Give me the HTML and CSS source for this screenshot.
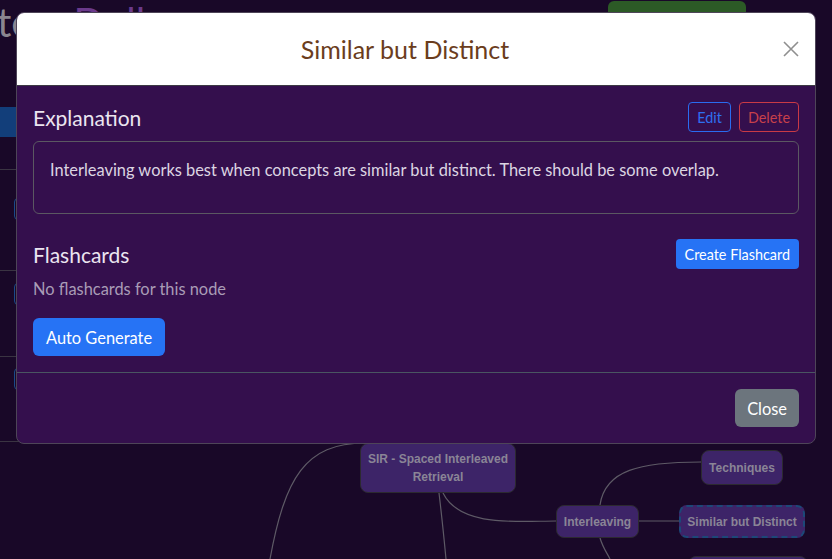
FILE: index.html
```html
<!DOCTYPE html>
<html lang="en">
<head>
<meta charset="utf-8">
<title>Similar but Distinct</title>
<link rel="stylesheet" href="styles.css">
</head>
<body>
<div class="app">
  <header class="topbar">
    <span class="brand-a">te</span>
    <span class="brand-b">Dolly</span>
    <span class="spacer"></span>
    <button class="btn-green">New Map</button>
  </header>
  <div class="main">
    <aside class="sidebar">
      <div class="side-head"></div>
      <div class="side-active"></div>
      <div class="side-row r1"><span class="side-btn"></span></div>
      <div class="side-row r2"><span class="side-btn"></span></div>
      <div class="side-row r3"><span class="side-btn"></span></div>
      <div class="side-row r4"><span class="side-btn"></span></div>
    </aside>
    <section class="canvas">
      <svg class="links" width="582" height="511" viewBox="0 0 582 511">
        <path d="M115 395 C55 395 35 430 20 511"/>
        <path d="M189 445 C192 470 194 490 196 511"/>
        <path d="M193 445 C210 480 270 473 306 473"/>
        <path d="M350 457 C355 422 390 414 451 414"/>
        <path d="M389 473 L429 473"/>
        <path d="M350 490 C353 500 357 505 360 511"/>
      </svg>
      <div class="node n-sir">SIR - Spaced Interleaved<br>Retrieval</div>
      <div class="node n-tech">Techniques</div>
      <div class="node n-inter">Interleaving</div>
      <div class="node n-sim">Similar but Distinct</div>
      <div class="node n-next"></div>
    </section>
  </div>
</div>

<div class="modal">
  <div class="modal-header">
    <h4 class="modal-title">Similar but Distinct</h4>
    <button class="btn-close" aria-label="Close">
      <svg width="16" height="16" viewBox="0 0 16 16"><path d="M1 1 L15 15 M15 1 L1 15"/></svg>
    </button>
  </div>
  <div class="modal-body">
    <div class="row-head">
      <h5>Explanation</h5>
      <div class="actions">
        <button class="btn-outline blue">Edit</button>
        <button class="btn-outline red">Delete</button>
      </div>
    </div>
    <div class="explain">
      <p>Interleaving works best when concepts are similar but distinct. There should be some overlap.</p>
    </div>
    <div class="row-head flash">
      <h5>Flashcards</h5>
      <button class="btn-primary sm">Create Flashcard</button>
    </div>
    <p class="muted">No flashcards for this node</p>
    <button class="btn-primary">Auto Generate</button>
  </div>
  <div class="modal-footer">
    <button class="btn-secondary">Close</button>
  </div>
</div>
</body>
</html>
```

FILE: styles.css
```css
* { box-sizing: border-box; }
html, body { margin: 0; padding: 0; }
body {
  width: 832px;
  height: 559px;
  overflow: hidden;
  background: #190828;
  font-family: "Lato", "Noto Sans", sans-serif;
  position: relative;
}
button { font-family: inherit; cursor: pointer; }

/* background app */
.app { display: flex; flex-direction: column; height: 559px; overflow: hidden; }
.topbar {
  height: 48px;
  flex: none;
  display: flex;
  align-items: flex-start;
}
.brand-a {
  font-size: 40px;
  line-height: 40px;
  color: #8a8690;
  margin-left: -3px;
  margin-top: 2px;
}
.brand-b {
  font-size: 40px;
  line-height: 40px;
  color: #6b3a8c;
  margin-left: 41px;
  margin-top: 2px;
}
.spacer { flex: 1; }
.btn-green {
  margin-top: 1px;
  margin-right: 86px;
  width: 138px;
  height: 38px;
  border: none;
  border-radius: 6px;
  background: #2c5a26;
  color: #b9c7b6;
  font-size: 16px;
}
.main { flex: 1; display: flex; min-height: 0; }
.sidebar { width: 250px; display: flex; flex-direction: column; }
.side-head { height: 59px; }
.side-active { height: 30px; background: #123e7a; }
.side-row { border-bottom: 1px solid #3a3442; }
.side-row.r1 { height: 33px; }
.side-row.r2 { height: 101px; }
.side-row.r3 { height: 86px; }
.side-row.r4 { height: 85px; }
.side-btn {
  display: block;
  margin-left: 14px;
  width: 60px;
  height: 22px;
  border: 1px solid #1a4a8a;
  border-radius: 4px;
}
.r1 .side-btn { display: none; }
.r2 .side-btn { margin-top: 28px; }
.r3 .side-btn { margin-top: 12px; }
.r4 .side-btn { margin-top: 11px; }

.canvas { flex: 1; position: relative; overflow: hidden; }
.links { position: absolute; left: 0; top: 0; }
.links path { fill: none; stroke: #5e5a66; stroke-width: 1.2; }
.node {
  position: absolute;
  display: flex;
  align-items: center;
  justify-content: center;
  text-align: center;
  background: #3d2468;
  border: 1px solid #2c2a30;
  border-radius: 8px;
  color: #8a8596;
  font-family: "Liberation Sans", Arial, sans-serif;
  font-weight: bold;
  font-size: 12px;
  line-height: 18px;
  white-space: nowrap;
}
.n-sir { left: 110px; top: 395px; width: 156px; height: 50px; }
.n-tech { left: 451px; top: 402px; width: 82px; height: 35px; }
.n-inter { left: 306px; top: 457px; width: 83px; height: 33px; }
.n-sim { left: 429px; top: 457px; width: 126px; height: 33px; border: 2px dashed #1c4878; }
.n-next { left: 438px; top: 508px; width: 120px; height: 33px; }

/* modal */
.modal {
  position: absolute;
  left: 16px;
  top: 12px;
  width: 800px;
  height: 432px;
  display: flex;
  flex-direction: column;
  background: #340f4d;
  border: 1px solid #4e4558;
  border-radius: 8px;
  overflow: hidden;
}
.modal-header {
  height: 73px;
  flex: none;
  background: #ffffff;
  display: flex;
  align-items: center;
  justify-content: center;
  position: relative;
  padding-right: 22px;
  border-bottom: 1px solid #3c3a44;
}
.modal-title {
  margin: 0;
  font-size: 25px;
  font-weight: 400;
  color: #6b3d1d;
}
.btn-close {
  position: absolute;
  right: 16px;
  top: 28px;
  background: none;
  border: none;
  padding: 0;
  width: 16px;
  height: 16px;
}
.btn-close svg { display: block; }
.btn-close path { stroke: #8f8f8f; stroke-width: 1.6; fill: none; }

.modal-body {
  padding: 16px;
  border-bottom: 1px solid #4a5562;
  flex: none;
  height: 287px;
}
.row-head {
  display: flex;
  align-items: center;
  justify-content: space-between;
  height: 30px;
}
.row-head h5 {
  margin: 0;
  font-size: 21px;
  font-weight: 400;
  color: #ebe5f0;
}
.actions { display: flex; gap: 8px; }
.btn-outline {
  height: 30px;
  padding: 0 8px;
  background: transparent;
  border-radius: 4px;
  font-size: 14.4px;
}
.btn-outline.blue { border: 1px solid #2a6cf0; color: #2e6ff0; }
.btn-outline.red { border: 1px solid #c93a45; color: #c8404a; }

.explain {
  margin-top: 9px;
  height: 73px;
  border: 1px solid #5b5862;
  border-radius: 6px;
  padding: 16px;
}
.explain p {
  margin: 0;
  font-size: 16.4px;
  line-height: 24px;
  color: #dcd5e2;
}
.row-head.flash { margin-top: 25px; }
.muted {
  margin: 8px 0 17px;
  font-size: 16.4px;
  line-height: 24px;
  color: #a99cb6;
}
.btn-primary {
  height: 38px;
  padding: 0 13px;
  background: #2673f5;
  color: #ffffff;
  border: none;
  border-radius: 6px;
  font-size: 16.4px;
}
.btn-primary.sm {
  height: 30px;
  padding: 0 9px;
  font-size: 14.4px;
  border-radius: 4px;
}
.modal-footer {
  flex: 1;
  display: flex;
  justify-content: flex-end;
  align-items: flex-start;
  padding: 16px;
}
.btn-secondary {
  height: 38px;
  padding: 0 12px;
  background: #6c757d;
  color: #ffffff;
  border: none;
  border-radius: 6px;
  font-size: 16.4px;
}
```
